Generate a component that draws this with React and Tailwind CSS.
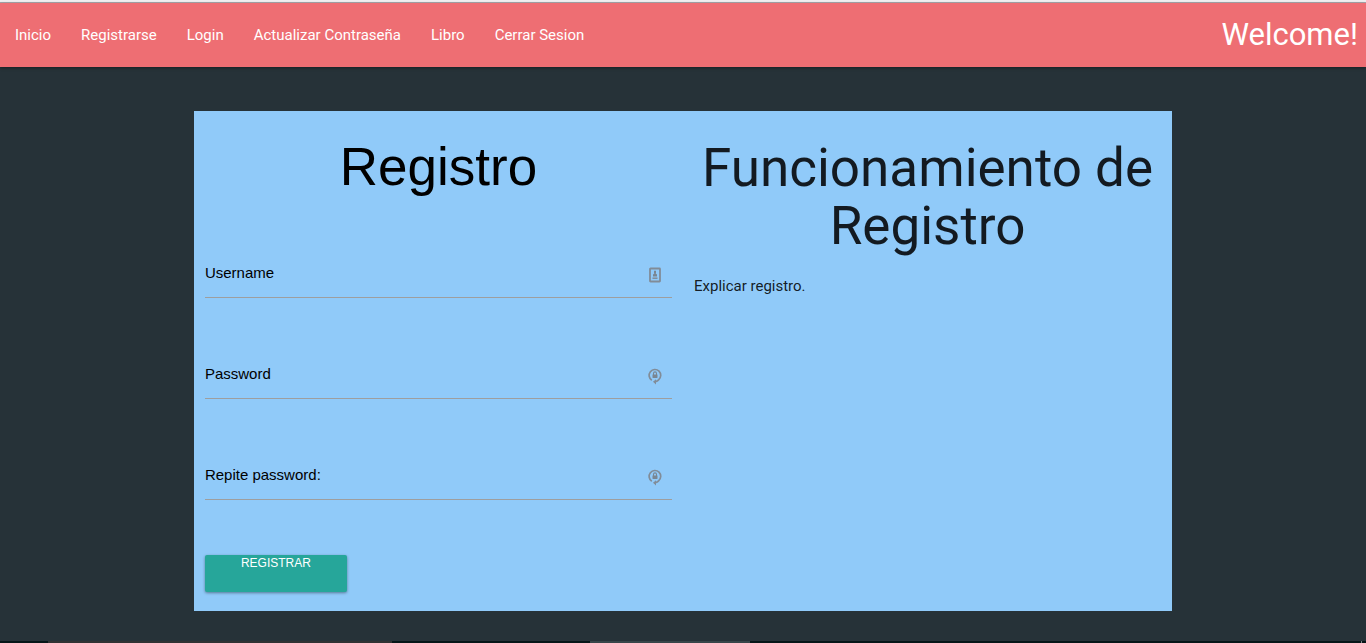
const links = ["Inicio", "Registrarse", "Login", "Actualizar Contraseña", "Libro", "Cerrar Sesion"];

const fields = [
  { id: "username", label: "Username", type: "text", Icon: CardIcon },
  { id: "password", label: "Password", type: "password", Icon: LockIcon },
  { id: "repeat", label: "Repite password:", type: "password", Icon: LockIcon },
];

function CardIcon() {
  return (
    <svg viewBox="0 0 16 18" className="h-[18px] w-4" aria-hidden="true">
      <rect x="3" y="2.5" width="10" height="13" rx="0.5" fill="none" stroke="#818c98" strokeWidth="1.8" />
      <path d="M8 4.8v3" stroke="#7a8692" strokeWidth="2" />
      <path d="M6 10.4V8.4Q8 6.6 10 8.4V10.4Z" fill="#7a8692" />
      <path d="M5.5 12.2h5" stroke="#818c98" strokeWidth="1.5" />
    </svg>
  );
}

function LockIcon() {
  return (
    <svg viewBox="0 0 16 18" className="h-[18px] w-4" aria-hidden="true">
      <path d="M4.8 13.2A5.8 5.8 0 1 1 11.6 12.8Q10.4 14 8.4 14.6" fill="none" stroke="#818c98" strokeWidth="1.7" />
      <path d="M9 12.2v5.2L6 14.8Z" fill="#818c98" />
      <path d="M6.5 8V6.4a1.5 1.5 0 0 1 3 0V8" fill="none" stroke="#7a8692" strokeWidth="1.1" />
      <rect x="5.5" y="7.4" width="5" height="3.6" rx="0.4" fill="#7a8692" />
    </svg>
  );
}

function Field({ id, label, type, Icon }) {
  return (
    <div className="relative">
      <label htmlFor={id} className="absolute top-2.5 left-0 text-[15px] leading-5 text-black">
        {label}
      </label>
      <input
        id={id}
        type={type}
        className="block h-[45px] w-full border-b border-[#9e9e9e] bg-transparent pr-8 outline-none"
      />
      <span className="absolute top-[13px] right-[9px]">
        <Icon />
      </span>
    </div>
  );
}

export default function App() {
  return (
    <div className="flex min-h-screen flex-col bg-[#263238] font-['Roboto',sans-serif] text-[15px]">
      <div className="h-[3px] border-b border-[#a9a9ad] bg-[#f0f0f1]" />
      <nav className="flex h-16 items-center justify-between bg-[#ee6e73] pr-2 text-white shadow-[0_1px_3px_rgba(0,0,0,0.4)]">
        <ul className="flex">
          {links.map((text) => (
            <li key={text}>
              <a href="#" className="block px-[15px] leading-[64px]">{text}</a>
            </li>
          ))}
        </ul>
        <span className="text-[31px] leading-[64px]">Welcome!</span>
      </nav>
      <main className="mx-auto w-[70%] flex-1 pt-11 pb-[30px]">
        <div className="-mx-[11px] grid grid-cols-2 bg-[#90caf9] pb-[19px]">
          <form className="px-[11px] pt-[27px] font-['Liberation_Sans',sans-serif]" onSubmit={(e) => e.preventDefault()}>
            <h1 className="mb-[57px] text-center text-[53px] leading-[58px] text-black">Registro</h1>
            <div className="flex flex-col gap-14">
              {fields.map((field) => (
                <Field key={field.id} {...field} />
              ))}
            </div>
            <button
              type="submit"
              className="mt-[55px] flex h-[37px] w-[142px] items-start justify-center rounded-xs bg-[#26a69a] text-[12px] leading-4 text-white uppercase shadow-[0_1px_3px_rgba(0,0,0,0.4)]"
            >
              Registrar
            </button>
          </form>
          <section className="px-[11px] pt-7 text-black/87">
            <h2 className="mb-5 text-center text-[53px] leading-[58px]">Funcionamiento de Registro</h2>
            <p className="text-[15px] leading-[22px]">Explicar registro.</p>
          </section>
        </div>
      </main>
      <footer className="flex h-0.5 bg-[#061618]">
        <span className="ml-12 w-[344px] bg-[#313233]" />
        <span className="ml-[198px] w-40 bg-[#37464a]" />
        <span className="mr-1 ml-auto w-px bg-[#7b8689]" />
      </footer>
    </div>
  );
}
